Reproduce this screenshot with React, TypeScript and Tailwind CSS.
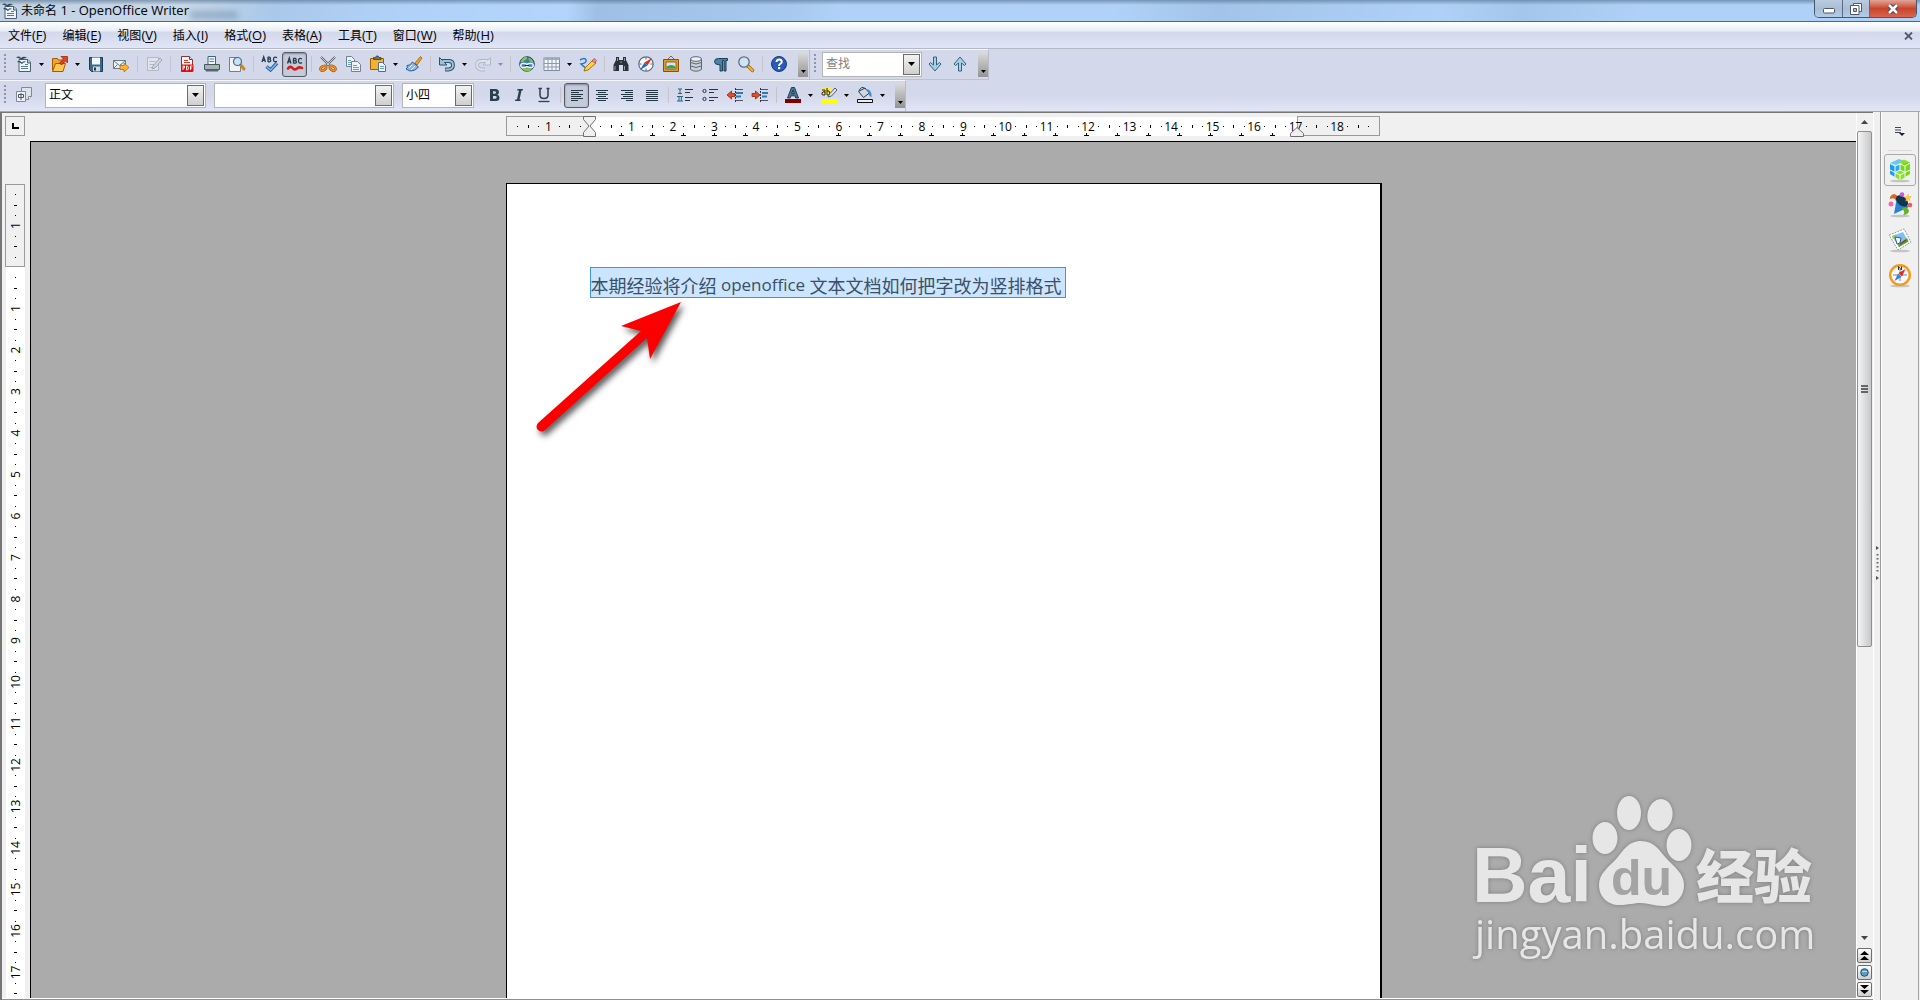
import React from 'react';

const UI_FONT = "font-['Open_Sans','Noto_Sans_CJK_SC',sans-serif]";

type KidsProps = { children: React.ReactNode };

function Glyph({ children }: KidsProps) {
  return (
    <svg viewBox="0 0 16 16" className="size-4 overflow-visible" aria-hidden="true">
      {children}
    </svg>
  );
}

const icons: Record<string, React.ReactNode> = {
  newDoc: (
    <>
      <path d="M3 3.500h9l2.500 2.500v9.500H3z" fill="#eef3f7" stroke="#48606f" />
      <path d="M11.500 3.500V7H15" fill="#b9c8d3" stroke="#48606f" />
      <path d="M0 1.500q3-2 5 .5Q8-.5 11 2 8 1.500 6 4 3 1.500 0 1.500zM1 6q2-2 5 .5 2-2 4-.5-3 0-4 2Q4 6 1 6z" fill="#2f4c5e" />
      <path d="M9 8.500h3M5 10.500h7M5 12.500h7" stroke="#5b7b90" />
    </>
  ),
  open: (
    <>
      <path d="M.5 14.500V2.500h5l1 1.500h5v4" fill="#f5a623" stroke="#a35a05" />
      <path d="M.5 15.500 3.500 7.500h10L11 15.500z" fill="#ffc850" stroke="#a35a05" />
      <path d="M9 .5h6.500V7l-2-2-4 4L7.500 7l4-4z" fill="#e2421f" stroke="#9c2a0c" strokeWidth=".8" />
    </>
  ),
  save: (
    <>
      <path d="M1.500 1.500h13v14h-11l-2-2z" fill="#3f6a86" stroke="#1d3b50" />
      <path d="M4 1.500h8v7H4z" fill="#f4f8fb" />
      <path d="M5 10.500h7v5H5z" fill="#cfdbe4" />
      <path d="M6 11.500h2v3H6z" fill="#1d3b50" />
    </>
  ),
  mail: (
    <>
      <path d="M.5 4.500h12v8H.5z" fill="#eef2f5" stroke="#667a88" />
      <path d="m.5 4.500 6 5 6-5M.5 12.500l4-4M12.500 12.500l-4-4" fill="none" stroke="#667a88" />
      <path d="M7 9.500h4V7l5 4.500-5 4.500v-2.500H7z" fill="#ffb52b" stroke="#b56a07" strokeWidth=".8" />
    </>
  ),
  edit: (
    <>
      <path d="M1.500 1.500h11v13h-11z" fill="#dfe4ee" stroke="#b4b9c6" />
      <path d="M3.500 5.500h6M3.500 8.500h5M3.500 11.500h3" stroke="#b4b9c6" />
      <path d="m6 13 1-3 7-8 2 2-7 8z" fill="#d0d5e0" stroke="#a0a6b4" />
    </>
  ),
  pdf: (
    <>
      <path d="M2.500.5h8l3 3v12h-11z" fill="#f6f6f6" stroke="#8b3530" />
      <path d="M10.500.5v3h3" fill="#dcdcdc" stroke="#8b3530" />
      <path d="M5 4.500h4M5 6.500h6" stroke="#cf3a31" />
      <path d="M2 8.500h12.500v7H2z" fill="#d9110b" />
      <path d="M4 14v-4h1.500v2H4M7.500 10v4h1l.8-1v-2l-.8-1zM11.500 14v-4H13.500M11.500 12h1.500" fill="none" stroke="#fff" strokeWidth=".9" />
    </>
  ),
  print: (
    <>
      <path d="M4 8V.5h7.500V8" fill="#f2f6fa" stroke="#3c6481" />
      <path d="M5.500 3h4.500M5.500 5.500h4.500" stroke="#4f86aa" />
      <path d="M.5 8.500h15v5H.5z" fill="#a5b0b8" stroke="#46545e" />
      <path d="M1 13.500h14l-1 2H2z" fill="#5b6872" />
      <path d="M12 10.500h2" stroke="#8de83a" strokeWidth="1.500" />
    </>
  ),
  preview: (
    <>
      <path d="M.5 1.500h9l2 2v12H.5z" fill="#eff3f6" stroke="#71828e" />
      <path d="m11 8 4 5" stroke="#c98715" strokeWidth="3" strokeLinecap="round" />
      <circle cx="8.500" cy="5.500" r="4" fill="#c9e2f4" stroke="#4a6b83" strokeWidth="1.200" />
    </>
  ),
  spell: (
    <>
      <path d="M0 6 1.700.8 3.400 6M.7 4.300h2M6 .8V6M6 1.200h1.800q1.400 1 0 2H6M7.800 3.300q2 1.300 0 2.500H6M15 1.700q-3.500-1.600-3.500 1.700T15 5.300" fill="none" stroke="#223d52" strokeWidth="1.300" />
      <path d="m4.500 10.500 4 3.500 6.500-7" fill="none" stroke="#1f5f93" strokeWidth="3.400" />
      <path d="m4.500 10.500 4 3.500 6.500-7" fill="none" stroke="#7cbcf0" strokeWidth="1.600" />
    </>
  ),
  autoSpell: (
    <>
      <path d="M.5 7.500 2.300 2 4 7.500M1 5.800h2.500M6.500 2v5.500M6.500 2.400h2q1.400 1.200 0 2.200h-2M8.500 4.700q2 1.300 0 2.500h-2M15 3q-3.500-1.700-3.500 1.800T15 6.700" fill="none" stroke="#223d52" strokeWidth="1.300" />
      <path d="M1 12.500q2.500-3 4.500-.5t4.500.5 5-.5" fill="none" stroke="#d41c1c" strokeWidth="2.600" strokeLinecap="round" />
    </>
  ),
  cut: (
    <>
      <path d="m1 1 9 9M15 1l-9 9" stroke="#5c6a74" strokeWidth="2.400" />
      <path d="m1 1 9 9M15 1l-9 9" stroke="#c8d2d9" strokeWidth="1" />
      <ellipse cx="3.300" cy="12.300" rx="3" ry="2" fill="none" stroke="#a8540a" strokeWidth="2.600" transform="rotate(-35 3.300 12.300)" />
      <ellipse cx="12.700" cy="12.300" rx="3" ry="2" fill="none" stroke="#a8540a" strokeWidth="2.600" transform="rotate(35 12.700 12.300)" />
      <ellipse cx="3.300" cy="12.300" rx="3" ry="2" fill="none" stroke="#f08c1c" strokeWidth="1.400" transform="rotate(-35 3.300 12.300)" />
      <ellipse cx="12.700" cy="12.300" rx="3" ry="2" fill="none" stroke="#f08c1c" strokeWidth="1.400" transform="rotate(35 12.700 12.300)" />
    </>
  ),
  copy: (
    <>
      <path d="M1.500.5h5l3 3v7h-8z" fill="#eef3f7" stroke="#6c8496" />
      <path d="M3 4.500h3M3 6.500h3M3 8.500h3" stroke="#6c9cc0" />
      <path d="M6.500 5.500h6l3 3v7h-9z" fill="#eef3f7" stroke="#6c8496" />
      <path d="M8 9.500h4M8 11.500h6M8 13.500h6" stroke="#6c9cc0" />
    </>
  ),
  paste: (
    <>
      <path d="M.5 2.500h13v11H.5z" fill="#f2b333" stroke="#9a5c07" />
      <path d="M3.500 3.500V1.500h2l1-1.500h1.500l1 1.500h2v2z" fill="#77716a" stroke="#4d4942" />
      <path d="M8.500 6.500h4l3 3v6h-7z" fill="#eef3f7" stroke="#56707f" />
      <path d="M10 10.500h4M10 12.500h4" stroke="#6c9cc0" />
    </>
  ),
  brush: (
    <>
      <path d="m9 7 5.500-6.500 1.500 1.500-5 7z" fill="#f0a32a" stroke="#9a5c07" strokeWidth=".8" />
      <path d="M1 9.500q3 .5 5.500-3.500l6 5Q9 15.500 4 15L0 13q2-1 1-3.500z" fill="#8ab7ea" stroke="#2d5d9b" />
      <path d="m3 12 3-3M5 14l4-4" stroke="#e6f1fc" />
    </>
  ),
  undo: (
    <>
      <path d="M3 5h6.500q4.500 0 4.500 4t-4.500 4.500H6" fill="none" stroke="#2c536d" strokeWidth="3.800" />
      <path d="M.5 1.500V9H8L5.500 6.500z" fill="#9cc3de" stroke="#2c536d" />
      <path d="M3.500 5h6q4.500 0 4.500 4t-4.500 4.500H6.500" fill="none" stroke="#9cc3de" strokeWidth="1.800" />
    </>
  ),
  redo: (
    <>
      <path d="M13 5H6.500Q2 5 2 9t4.500 4.500H10" fill="none" stroke="#b3b8c5" strokeWidth="3.800" />
      <path d="M15.500 1.500V9H8l2.500-2.500z" fill="#dfe3ec" stroke="#b3b8c5" />
      <path d="M12.500 5h-6Q2 5 2 9t4.500 4.500h3" fill="none" stroke="#dfe3ec" strokeWidth="1.800" />
    </>
  ),
  link: (
    <>
      <circle cx="8" cy="8" r="7.300" fill="#3f7fa8" stroke="#1f4a66" />
      <path d="M3 3q3-3 5-2 0 3-2 3L4 6 1.500 6zM9 2q4 0 5.500 5l-3-1zM2 12q2 3 6 3.500 4-.5 5.500-3z" fill="#8cc63f" />
      <rect x="1.800" y="7.500" width="6" height="4" rx="2" fill="none" stroke="#eef" strokeWidth="1.500" />
      <rect x="8.200" y="7.500" width="6" height="4" rx="2" fill="none" stroke="#eef" strokeWidth="1.500" />
      <path d="M6 9.500h4" stroke="#223" />
    </>
  ),
  table: (
    <>
      <path d="M0 1.500h15.500v13H0z" fill="#f3f6fa" stroke="#7b8b9b" />
      <path d="M0 1h15.500v3H0z" fill="#9fb2c3" />
      <path d="M0 7.500h15.500M0 11h15.500M4 2v12.500M8 2v12.500M12 2v12.500" stroke="#8b9bab" />
    </>
  ),
  draw: (
    <>
      <path d="M0 4q5-3 6 0T1 8q2 2 5 4" fill="none" stroke="#2577c9" strokeWidth="1.500" />
      <path d="m5 12 8-8 3 3-8 7-4 1z" fill="#ffd24a" stroke="#a3700b" />
      <path d="m12 5 2-2.500 2.500 2L15 7z" fill="#e98f96" stroke="#a8434b" strokeWidth=".7" />
    </>
  ),
  find: (
    <>
      <path d="M3 1h3v3h4V1h3v3l2.500 5v6H10V9H6v6H.5V9L3 4z" fill="#2a3239" />
      <path d="M2 10v4M11.500 10v4M4.500 2v3M11.500 2v3M7 6h2" stroke="#8d99a3" />
    </>
  ),
  compass: (
    <>
      <circle cx="8" cy="8" r="7.200" fill="#f8fafc" stroke="#5a6d7d" strokeWidth="1.200" />
      <path d="M8 1.500v2M8 12.500v2M1.500 8h2M12.500 8h2" stroke="#567" />
      <path d="M14 2 9.500 9.500l-3-3z" fill="#e02c1f" />
      <path d="M2 14 6.500 6.500l3 3z" fill="#2968c4" />
    </>
  ),
  gallery: (
    <>
      <path d="m5 3 3-3 3 3" fill="none" stroke="#7a6a4a" />
      <path d="M.5 3.500h15v12H.5z" fill="#e2992b" stroke="#8a4f08" />
      <path d="M3 6h10v7H3z" fill="#cfe8fb" stroke="#8a4f08" strokeWidth=".8" />
      <path d="M3.500 12.500v-2q5-3 9 0v2z" fill="#4b9a3c" />
    </>
  ),
  database: (
    <>
      <path d="M2.500 3v10.500q5.500 3.500 11 0V3z" fill="#c9d1d8" stroke="#5c6972" />
      <path d="M2.500 6.500q5.500 3 11 0M2.500 10q5.500 3 11 0" fill="none" stroke="#5c6972" />
      <ellipse cx="8" cy="3" rx="5.500" ry="2.300" fill="#eef1f4" stroke="#5c6972" />
    </>
  ),
  pilcrow: <path d="M14.500 2.500H5.500q-4 0-4 3t4 3.200h1.500V15h2.500V4.500h1.500V15H13V4.500h1.500z" fill="#4c82a5" stroke="#1d3f57" />,
  zoom: (
    <>
      <path d="m10 10 4.500 4.500" stroke="#a0650c" strokeWidth="3.400" strokeLinecap="round" />
      <path d="m10 10 4.500 4.500" stroke="#f5b840" strokeWidth="1.800" strokeLinecap="round" />
      <circle cx="6" cy="6" r="5.200" fill="#cfe5f6" stroke="#5b7080" strokeWidth="1.300" />
    </>
  ),
  help: (
    <>
      <circle cx="8" cy="8" r="7.500" fill="#2a5bb8" stroke="#173a80" />
      <path d="M5.500 6q.2-2.500 2.700-2.500T10.800 6Q10.600 7.300 9 8q-1 .6-.9 2" fill="none" stroke="#fff" strokeWidth="1.900" />
      <path d="M7 11h2.200v2.200H7z" fill="#fff" />
    </>
  ),
  arrowDown: <path d="M6.500 1h3v8l3-2.500L14 8l-6 7-6-7 1.500-1.500 3 2.500z" fill="#a9cfe6" stroke="#33627f" />,
  arrowUp: <path d="M6.500 15h3V7l3 2.500L14 8 8 1 2 8l1.500 1.500 3-2.500z" fill="#a9cfe6" stroke="#33627f" />,
  styles: (
    <>
      <path d="M5.500.5h10v9l-3 3h-7z" fill="#dde5ec" stroke="#7d8a95" />
      <path d="M12.500 12.500v-3h3" fill="#fff" stroke="#7d8a95" />
      <path d="M.5 4.500h9v10h-9z" fill="#eef2f6" stroke="#7d8a95" />
      <path d="M2.500 7.500h5v3h-5zM5 6v7" fill="none" stroke="#4a5a67" />
    </>
  ),
  bold: <path d="M4 2h5.500q3.500.3 3.500 3.300 0 1.800-1.700 2.500 2.200.6 2.200 3Q13.500 14 10 14H4zM7 4.300v2.500h1.800q1.400-.2 1.400-1.200T8.800 4.300zM7 9v2.700h2.300q1.400-.2 1.400-1.400T9.300 9z" fill="#2b3f51" fillRule="evenodd" />,
  italic: <path d="M6.500 2H12l-.3 1.500H10.500L8.500 12.500h1.300L9.500 14H4l.3-1.500H6L8 3.500H6.200z" fill="#2b3f51" />,
  underline: (
    <>
      <path d="M4 1.500v6.500q0 3.500 4 3.500t4-3.500V1.500M2.500 1.500H6M10.500 1.500h3" fill="none" stroke="#2b3f51" strokeWidth="1.500" />
      <path d="M2.500 14.500h11" stroke="#2b3f51" strokeWidth="1.300" />
    </>
  ),
  alignLeft: <path d="M2 3.500h12M2 5.500h8M2 7.500h12M2 9.500h10M2 11.500h12M2 13.500h7" stroke="#243544" />,
  alignCenter: <path d="M2 3.500h12M4 5.500h8M2 7.500h12M4 9.500h8M2 11.500h12M4 13.500h8" stroke="#243544" />,
  alignRight: <path d="M2 3.500h12M6 5.500h8M2 7.500h12M4 9.500h10M2 11.500h12M7 13.500h7" stroke="#243544" />,
  justify: <path d="M2 3.500h12M2 5.500h12M2 7.500h12M2 9.500h12M2 11.500h12M2 13.500h12" stroke="#243544" />,
  numbered: (
    <>
      <path d="M1 2h4M1 6.500h4M3 2v4.500M0 9.500h6M0 14h6M2 9.500V14M4.300 9.500V14" stroke="#2d6183" />
      <path d="M8 2.500h8M8 5.500h5M8 10.500h8M8 13.500h5" stroke="#243544" />
    </>
  ),
  bullets: (
    <>
      <circle cx="2.500" cy="4" r="1.600" fill="#dde" stroke="#243544" />
      <circle cx="2.500" cy="12" r="1.600" fill="#dde" stroke="#243544" />
      <path d="M7 2.500h9M7 5.500h5M7 10.500h9M7 13.500h5" stroke="#243544" />
    </>
  ),
  outdent: (
    <>
      <path d="M8.500 1v14" stroke="#334" strokeDasharray="2 1" />
      <path d="M9 2.500h7M9 13.500h7" stroke="#556" />
      <path d="M9 6h7M9 9.500h5" stroke="#2a7cb8" strokeWidth="2" />
      <path d="M0 8l4.500-4v2.500H8v3H4.500V12z" fill="#e2502f" stroke="#8f2209" strokeWidth=".8" />
    </>
  ),
  indent: (
    <>
      <path d="M8.500 1v14" stroke="#334" strokeDasharray="2 1" />
      <path d="M9 2.500h7M9 13.500h7" stroke="#556" />
      <path d="M10 6h6M10 9.500h5" stroke="#2a7cb8" strokeWidth="2" />
      <path d="M8 8 3.500 4v2.500H0v3h3.500V12z" fill="#e2502f" stroke="#8f2209" strokeWidth=".8" />
    </>
  ),
  fontColor: (
    <>
      <path d="M2.500 11 6.500.5h3L13.500 11h-2.800l-.8-2.200H6L5.200 11zM6.800 6.600h2.400L8 3z" fill="#4c7590" stroke="#1b3345" strokeWidth=".9" />
      <path d="M0 12h16v4H0z" fill="#800000" />
    </>
  ),
  highlight: (
    <>
      <path d="M0 0h11v9H0z" fill="#ffe94a" />
      <path d="M1 3h3v5H2Q.5 8 1 6t3-.8M6 1v7h2q1.500-2 0-4H6" fill="none" stroke="#222" />
      <path d="m7 10 1.500-3L14 1l2 2-5.500 6z" fill="#dfe6ec" stroke="#4f5d68" />
      <path d="M0 12h16v4H0z" fill="#ffff00" />
    </>
  ),
  fill: (
    <>
      <path d="m1.500 4.500 6.500-3.500 4.500 5-6 4.500z" fill="#cfd8df" stroke="#2c3e4c" />
      <path d="M2 4Q4-1.500 8 1.500" fill="none" stroke="#2c3e4c" />
      <path d="M8 2q7-.5 6.500 8-3-.5-2.500-4z" fill="#3c8fc9" />
      <path d="M.5 12.500h15v3H.5z" fill="#e8ecf8" stroke="#111" />
    </>
  ),
};

function Tool({ name, label, pressed }: { name: string; label: string; pressed?: boolean }) {
  return (
    <button
      type="button"
      aria-label={label}
      aria-pressed={pressed}
      className={
        pressed
          ? 'flex h-[25px] w-[25px] shrink-0 items-center justify-center rounded-[3px] border border-[#565b68] bg-[#c6cbda] shadow-[inset_0_1px_2px_#8087a0]'
          : 'flex h-[25px] w-[25px] shrink-0 items-center justify-center'
      }
    >
      <Glyph>{icons[name]}</Glyph>
    </button>
  );
}

function Caret({ label, dim }: { label: string; dim?: boolean }) {
  return (
    <button type="button" aria-label={label} className="flex h-[25px] w-[11px] shrink-0 items-center justify-center">
      <svg viewBox="0 0 5 3" className="h-[3px] w-[5px]" aria-hidden="true">
        <path d="M0 0h5L2.500 3z" fill={dim ? '#8d92a0' : '#000'} />
      </svg>
    </button>
  );
}

function Sep() {
  return (
    <div className="flex w-2 shrink-0 justify-center">
      <div className="h-4 w-px bg-[#c3c3c8]" />
    </div>
  );
}

function Grip() {
  return <div className="ml-1 h-5 w-[3px] shrink-0 bg-[repeating-linear-gradient(#8f95a5_0_2px,transparent_2px_4px)] bg-[length:2px_100%] bg-no-repeat" />;
}

function Overflow({ label }: { label: string }) {
  return (
    <button type="button" aria-label={label} className="flex h-[25px] w-[10px] shrink-0 items-end justify-center bg-linear-to-b from-[#dcdcdc] to-[#949494] pb-1">
      <svg viewBox="0 0 5 3" className="h-[3px] w-[5px]" aria-hidden="true">
        <path d="M0 0h5L2.500 3z" />
      </svg>
    </button>
  );
}

function DropArrow() {
  return (
    <span className="pointer-events-none absolute top-px right-px bottom-px flex w-[17px] items-center justify-center border border-[#6c6c6c] bg-linear-to-b from-[#f3f3f3] to-[#cfcfcf]">
      <svg viewBox="0 0 7 4" className="h-1 w-[7px]" aria-hidden="true">
        <path d="M0 0h7L3.500 4z" />
      </svg>
    </span>
  );
}

function Combo({ label, value, className }: { label: string; value: string; className: string }) {
  return (
    <div className={`relative h-[25px] shrink-0 border border-[#b4b4b4] bg-white ${className}`}>
      <select aria-label={label} defaultValue={value} className="block h-full w-full appearance-none bg-transparent pb-px pl-[3px] text-xs leading-none text-black outline-none">
        <option value={value}>{value}</option>
      </select>
      <DropArrow />
    </div>
  );
}

const menus: [string, string][] = [
  ['文件', 'F'],
  ['编辑', 'E'],
  ['视图', 'V'],
  ['插入', 'I'],
  ['格式', 'O'],
  ['表格', 'A'],
  ['工具', 'T'],
  ['窗口', 'W'],
  ['帮助', 'H'],
];

function TitleBar() {
  return (
    <header className="relative flex h-[22px] shrink-0 items-center overflow-hidden border-b border-[#56657c] bg-[linear-gradient(to_bottom,rgba(70,100,130,0.55),rgba(120,150,180,0)_5px),linear-gradient(100deg,#c0d2e4_0,#c8d8e8_180px,#a9c8ea_270px,#b1d2f8_400px,#b4d5fb_560px,#9fc0e4_590px,#a8c9ee_780px,#b1d2f8_830px,#b1d2f8_1100px,#a3c4e9_1200px,#b0d1f7_1420px,#a4c6ea_1500px,#b0d1f7_1620px,#b0d1f7_100%)] pl-[2px]">
      <div className="absolute top-[11px] left-[190px] h-2 w-12 bg-[#6f87a4] opacity-50 blur-[3px]" />
      <Glyph>{icons.newDoc}</Glyph>
      <h1 className="relative ml-[3px] text-[13px] whitespace-nowrap text-black">
        <span className="text-xs">未命名</span> 1 - OpenOffice Writer
      </h1>
      <div className="mr-[3px] ml-auto flex h-[18px] self-start overflow-hidden rounded-b-[5px] border border-t-0 border-[#47566b]">
        <button type="button" aria-label="最小化" className="flex w-7 items-center justify-center border-r border-[#5a6b83] bg-linear-to-b from-[#b8cbe0] via-[#a9bdd5] to-[#b4cce8]">
          <svg viewBox="0 0 12 6" className="mt-1 h-[6px] w-3" aria-hidden="true">
            <rect x=".5" y=".5" width="11" height="4.500" rx="1" fill="#fff" stroke="#4c586c" />
          </svg>
        </button>
        <button type="button" aria-label="还原" className="flex w-[27px] items-center justify-center border-r border-[#5a6b83] bg-linear-to-b from-[#b8cbe0] via-[#a9bdd5] to-[#b4cce8]">
          <svg viewBox="0 0 12 12" className="size-3" aria-hidden="true">
            <path d="M3.500.5h8v8h-8z" fill="#fff" stroke="#4c586c" />
            <path d="M.5 2.500h8.500v9H.5z" fill="#fff" stroke="#4c586c" />
            <path d="M3.500 5.500h3v3h-3z" fill="#a9bdd5" stroke="#4c586c" />
          </svg>
        </button>
        <button type="button" aria-label="关闭" className="flex w-[46px] items-center justify-center bg-linear-to-b from-[#e0a598] via-[#c8442c] to-[#d9644c]">
          <svg viewBox="0 0 12 10" className="h-[10px] w-3" aria-hidden="true">
            <path d="m2 1 8 8M10 1 2 9" stroke="#4c3a48" strokeWidth="4.500" />
            <path d="m2 1 8 8M10 1 2 9" stroke="#fff" strokeWidth="2.600" />
          </svg>
        </button>
      </div>
    </header>
  );
}

function MenuBar() {
  return (
    <nav className="flex h-[27px] shrink-0 items-center border-b border-[#b4b9c8] bg-[linear-gradient(#ffffff_0,#e8eef6_9px,#d3d9eb_10px,#e0e6f6_26px)] pt-px pl-2">
      {menus.map(([text, key]) => (
        <button key={key} type="button" className="mr-4 text-[13px] whitespace-nowrap text-black">
          <span className="text-xs">{text}</span>(<span className="underline underline-offset-2">{key}</span>)
        </button>
      ))}
      <button type="button" aria-label="关闭文档" className="mr-[7px] ml-auto">
        <svg viewBox="0 0 9 8" className="h-2 w-[9px]" aria-hidden="true">
          <path d="m1 .5 7 7M8 .5l-7 7" stroke="#4c5a70" strokeWidth="1.800" />
        </svg>
      </button>
    </nav>
  );
}

function StandardBar() {
  return (
    <div role="toolbar" aria-label="标准" className="flex h-[31px] items-center">
      <div className="flex h-full items-center border-t border-r border-b border-t-[#f4f6fc] border-r-[#b9bcc6] border-b-[#bfc2cc] pb-px">
        <Grip />
        <div className="ml-1 flex items-center">
          <Tool name="newDoc" label="新建" />
          <Caret label="新建选项" />
          <Tool name="open" label="打开" />
          <Caret label="打开选项" />
          <Tool name="save" label="保存" />
          <Tool name="mail" label="以电子邮件发送" />
          <Sep />
          <Tool name="edit" label="编辑文件" />
          <Sep />
          <Tool name="pdf" label="导出为 PDF" />
          <Tool name="print" label="打印" />
          <Tool name="preview" label="页面预览" />
          <Sep />
          <Tool name="spell" label="拼写检查" />
          <Tool name="autoSpell" label="自动拼写检查" pressed />
          <Sep />
          <Tool name="cut" label="剪切" />
          <Tool name="copy" label="复制" />
          <Tool name="paste" label="粘贴" />
          <Caret label="粘贴选项" />
          <Tool name="brush" label="格式刷" />
          <Sep />
          <Tool name="undo" label="撤消" />
          <Caret label="撤消列表" />
          <Tool name="redo" label="恢复" />
          <Caret label="恢复列表" dim />
          <Sep />
          <Tool name="link" label="超链接" />
          <Tool name="table" label="表格" />
          <Caret label="表格选项" />
          <Tool name="draw" label="显示绘图功能" />
          <Sep />
          <Tool name="find" label="查找与替换" />
          <Tool name="compass" label="导航" />
          <Tool name="gallery" label="图片库" />
          <Tool name="database" label="数据源" />
          <Tool name="pilcrow" label="非打印字符" />
          <Tool name="zoom" label="显示比例" />
          <Sep />
          <Tool name="help" label="帮助" />
        </div>
        <div className="mr-px ml-[7px] flex">
          <Overflow label="更多标准工具" />
        </div>
      </div>
      <div className="flex h-full items-center border-t border-r border-b border-t-[#f4f6fc] border-r-[#b9bcc6] border-b-[#bfc2cc] pb-px">
        <Grip />
        <div className="relative ml-[5px] h-[25px] w-[100px] border border-[#b4b4b4] bg-white">
          <input aria-label="查找" placeholder="查找" className="block h-full w-full bg-transparent pr-5 pb-px pl-[3px] text-xs outline-none placeholder:text-[#808080]" />
          <DropArrow />
        </div>
        <Tool name="arrowDown" label="查找下一个" />
        <Tool name="arrowUp" label="查找上一个" />
        <div className="ml-[6px] flex">
          <Overflow label="更多查找工具" />
        </div>
      </div>
    </div>
  );
}

function FormatBar() {
  return (
    <div role="toolbar" aria-label="格式" className="flex h-[31px] items-center">
      <div className="flex h-full items-center border-t border-r border-t-[#f4f6fc] border-r-[#b9bcc6] pb-[2px]">
        <Grip />
        <div className="ml-1 flex items-center">
          <Tool name="styles" label="样式和格式" />
          <Combo label="应用样式" value="正文" className="ml-[9px] w-[161px]" />
          <Combo label="字体名称" value="" className="ml-2 w-[180px]" />
          <Combo label="字体大小" value="小四" className="ml-2 w-[72px]" />
          <div className="w-[7px]" />
          <Tool name="bold" label="粗体" />
          <Tool name="italic" label="斜体" />
          <Tool name="underline" label="下划线" />
          <Sep />
          <Tool name="alignLeft" label="左对齐" pressed />
          <Tool name="alignCenter" label="居中" />
          <Tool name="alignRight" label="右对齐" />
          <Tool name="justify" label="两端对齐" />
          <Sep />
          <Tool name="numbered" label="编号" />
          <Tool name="bullets" label="项目符号" />
          <Tool name="outdent" label="减少缩进" />
          <Tool name="indent" label="增加缩进" />
          <Sep />
          <Tool name="fontColor" label="字体颜色" />
          <Caret label="字体颜色选项" />
          <Tool name="highlight" label="突出显示" />
          <Caret label="突出显示选项" />
          <Tool name="fill" label="背景颜色" />
          <Caret label="背景颜色选项" />
        </div>
        <div className="ml-[7px] flex">
          <Overflow label="更多格式工具" />
        </div>
      </div>
    </div>
  );
}

const CM = 41.5;
const range = (from: number, to: number) => Array.from({ length: to - from + 1 }, (_, i) => from + i);

function HorizontalRuler() {
  const zero = 84;
  const quarters = range(-7, 78).filter((q) => q % 4 !== 0);
  return (
    <svg viewBox="0 0 875 22" className="h-[22px] w-[875px] shrink-0" aria-label="水平标尺" shapeRendering="crispEdges">
      <rect x="84" y="1" width="707" height="19" fill="#fff" />
      <path d="M84 .5H.5v19H84M791 .5h82.500v19H791V.5" fill="none" stroke="#9a9a9a" />
      {quarters.map((q) => {
        const x = Math.round(zero + (q * CM) / 4);
        return q % 2 === 0 ? (
          <rect key={q} x={x} y="9" width="1" height="3" />
        ) : (
          <rect key={q} x={x} y="10" width="1" height="1" />
        );
      })}
      {range(1, 22).map((k) => (
        <path key={k} d={`M${zero + k * 31 - 2} 19.500h5M${zero + k * 31 + 0.5} 17v3`} stroke="#000" />
      ))}
      {range(-1, 18)
        .filter((n) => n !== 0)
        .map((n) => (
          <text key={n} x={zero + n * CM} y="15" textAnchor="middle" fontSize="12">
            {Math.abs(n)}
          </text>
        ))}
      <g fill="#f0f0f0" stroke="#6f6f6f" shapeRendering="auto">
        <path d="M77.500.5h12v3L84 10l5.500 6.500v4h-12v-4L83 10l-5.500-6.500z" />
        <path d="M784.500 20.500v-3l6.500-6 6.500 6v3z" />
      </g>
    </svg>
  );
}

function VerticalRuler() {
  const zero = 83;
  const quarters = range(-7, 71).filter((q) => q % 4 !== 0);
  return (
    <svg viewBox="0 0 20 1000" className="h-[1000px] w-5 shrink-0" aria-label="垂直标尺" shapeRendering="crispEdges">
      <rect x="1" y={zero} width="19" height="917" fill="#fff" />
      <rect x=".5" y=".5" width="19" height="82" fill="#f0f0f0" stroke="#9a9a9a" />
      {quarters.map((q) => {
        const y = Math.round(zero + (q * CM) / 4);
        return q % 2 === 0 ? (
          <rect key={q} x="9" y={y} width="3" height="1" />
        ) : (
          <rect key={q} x="10" y={y} width="1" height="1" />
        );
      })}
      {range(-1, 17)
        .filter((n) => n !== 0)
        .map((n) => (
          <text key={n} transform={`translate(15 ${zero + n * CM}) rotate(-90)`} textAnchor="middle" fontSize="12">
            {Math.abs(n)}
          </text>
        ))}
    </svg>
  );
}

function Arrow() {
  return (
    <svg viewBox="0 0 156 140" className="absolute top-[114px] left-[28px] h-[140px] w-[156px] drop-shadow-[3px_4px_3px_rgba(0,0,0,0.65)]" aria-hidden="true">
      <path d="M146 4 86 28l20 5-103 92q-3 4 0 7 4 3 7 0L112 40l3 21z" fill="#fb0000" />
    </svg>
  );
}

function Watermark() {
  return (
    <svg viewBox="0 0 346 166" className="absolute right-[38px] bottom-[38px] h-[166px] w-[346px] drop-shadow-[0_0_2px_rgba(90,90,90,0.6)]" role="img" aria-label="Baidu 经验">
      <g fill="#e6e6e6">
        <text x="0" y="108" fontSize="77" fontWeight="700" fontFamily="Liberation Sans, sans-serif">
          Bai
        </text>
        <ellipse cx="133" cy="44" rx="12.500" ry="16" />
        <ellipse cx="157" cy="19" rx="12" ry="17" />
        <ellipse cx="188" cy="21" rx="12.500" ry="16" transform="rotate(10 188 21)" />
        <ellipse cx="207" cy="51" rx="12.500" ry="16" />
        <path d="M169 47c-13 0-18 10-24 17-8 9-18 15-18 27 0 12 9 20 20 20 9 0 15-2 22-2s13 3 22 3c11 0 21-8 21-21 0-12-10-18-18-27-7-8-12-17-25-17z" />
        <text x="224" y="104" fontSize="58" fontWeight="900" fontFamily="Noto Sans CJK SC, sans-serif">
          经验
        </text>
        <text x="3" y="155" fontSize="40" fontFamily="Open Sans, sans-serif">
          jingyan.baidu.com
        </text>
      </g>
      <text x="139" y="101" fontSize="50" fontWeight="700" fontFamily="Liberation Sans, sans-serif" fill="#a4a4a4">
        du
      </text>
    </svg>
  );
}

function DocumentArea() {
  return (
    <main className="relative flex min-w-0 flex-1 justify-center overflow-hidden border-t border-l border-black bg-[#ababab] pt-[41px]">
      <article className="relative w-[876px] shrink-0 border-t border-r-2 border-l border-black bg-white px-[83px] pt-[83px]">
        <p className="flex h-[31px] w-[476px] items-center border border-[#3d95e8] bg-[#cce5fe] pt-1 text-lg leading-none whitespace-pre text-[#3b4f66]">
          <span className="font-['Noto_Sans_CJK_SC',sans-serif]">本期经验将介绍</span>
          <span className="text-[17px]"> openoffice </span>
          <span className="font-['Noto_Sans_CJK_SC',sans-serif]">文本文档如何把字改为竖排格式</span>
        </p>
        <Arrow />
      </article>
      <Watermark />
    </main>
  );
}

function NavButton({ label, children }: { label: string; children: React.ReactNode }) {
  return (
    <button type="button" aria-label={label} className="mt-[2px] flex size-[15px] items-center justify-center rounded-[2px] border border-[#6e6e6e] bg-linear-to-b from-white to-[#cfcfcf]">
      <svg viewBox="0 0 9 9" className="size-[9px]" aria-hidden="true">
        {children}
      </svg>
    </button>
  );
}

function ScrollColumn() {
  return (
    <div className="flex w-[17px] shrink-0 flex-col items-center border-l border-white bg-[#f0f0f0] pr-px pb-px">
      <button type="button" aria-label="向上滚动" className="flex h-[18px] w-full items-center justify-center">
        <svg viewBox="0 0 7 4" className="h-1 w-[7px]" aria-hidden="true">
          <path d="M0 4h7L3.500 0z" fill="#444" />
        </svg>
      </button>
      <div className="flex w-full flex-1 flex-col">
        <div className="flex h-[516px] w-full flex-col items-center justify-center gap-px rounded-[2px] border border-[#8f8f8f] bg-linear-to-r from-[#f4f4f4] to-[#c6c8ca]">
          <div className="h-[2px] w-[7px] bg-[#666]" />
          <div className="h-[2px] w-[7px] bg-[#666]" />
          <div className="h-[2px] w-[7px] bg-[#666]" />
        </div>
      </div>
      <button type="button" aria-label="向下滚动" className="flex h-4 w-full items-center justify-center">
        <svg viewBox="0 0 7 4" className="h-1 w-[7px]" aria-hidden="true">
          <path d="M0 0h7L3.500 4z" fill="#444" />
        </svg>
      </button>
      <NavButton label="上一页">
        <path d="M0 4h9L4.500 0zM0 9h9L4.500 5z" />
      </NavButton>
      <NavButton label="导航">
        <circle cx="4.500" cy="4.500" r="3.800" fill="#5f9cc4" stroke="#234d6b" />
        <path d="M2 3.500h5" stroke="#b9dbf0" />
      </NavButton>
      <NavButton label="下一页">
        <path d="M0 0h9L4.500 4zM0 5h9L4.500 9z" />
      </NavButton>
    </div>
  );
}

function Splitter() {
  return (
    <div className="flex w-2 shrink-0 flex-col items-center justify-center border-r border-l border-r-[#9a9a9a] border-l-white bg-[#f0f0f0] pt-[14px]">
      <svg viewBox="0 0 3 34" className="h-[34px] w-[3px]" aria-hidden="true">
        <path d="M0 0v4l3-2zM0 30v4l3-2z" fill="#555" />
        <path d="M.5 8h2v1.500h-2zM.5 12h2v1.500h-2zM.5 16h2v1.500h-2zM.5 20h2v1.500h-2zM.5 24h2v1.500h-2z" fill="#666" />
      </svg>
    </div>
  );
}

function Deck({ label, active, children }: { label: string; active?: boolean; children: React.ReactNode }) {
  return (
    <button
      type="button"
      aria-label={label}
      aria-pressed={active}
      className={
        active
          ? 'flex size-8 items-center justify-center rounded-[3px] border border-[#a9a9a9]'
          : 'flex size-8 items-center justify-center'
      }
    >
      <svg viewBox="0 0 24 24" className="size-6 overflow-visible" aria-hidden="true">
        <ellipse cx="12" cy="23" rx="10" ry="1.300" fill="#c4c4c4" />
        {children}
      </svg>
    </button>
  );
}

function Sidebar() {
  return (
    <aside className="mr-px flex w-[38px] shrink-0 flex-col items-center border-r border-l border-r-[#a5a5a5] border-l-white bg-[#f0f0f0] pt-[10px]">
      <button type="button" aria-label="侧边栏设置" className="mb-[11px] flex h-[17px] w-6 items-center justify-center">
        <svg viewBox="0 0 10 10" className="size-[10px] overflow-visible" aria-hidden="true">
          <path d="M0 1.500h6M0 4h6M0 6.500h6" stroke="#3a4658" />
          <path d="M4 7h6L7 10z" fill="#16203a" />
        </svg>
      </button>
      <div className="mb-[3px] h-px w-6 bg-[#dadada]" />
      <div className="flex flex-col gap-[3px]">
        <Deck label="属性" active>
          <path d="m2 5 9-4 5 2-8 4z" fill="#63c9f5" />
          <path d="m2 5 5 2.500V19l-5-3z" fill="#1b9cf0" />
          <path d="m7 7.500 5-2v14l-5-.5z" fill="#2fa8f4" />
          <path d="m11 4 5-2.500 6 3-5 3z" fill="#8be028" />
          <path d="m12 6 10-2v12l-10 6z" fill="#7ad51a" />
          <path d="m7 14 5-2 5 2v5l-5 3-5-3z" fill="#8be028" />
          <path d="m2 5.500 5 2.500 5-2 5 2 5-3M7 8v11M12 6v6M17 8v11M2 12l5 2.500 5-2.500 5 2.500 5-2.500M12 17v5M7 14.500l5 2.500 5-2.500" fill="none" stroke="#f4fcff" strokeWidth="1" />
        </Deck>
        <Deck label="样式和格式">
          <path d="M2 4q4-6 8 0l-2 4q-1-4-6-2z" fill="#d9691c" />
          <path d="m9 4 12 10-15 7z" fill="#2a83d0" />
          <ellipse cx="14" cy="8" rx="7" ry="4.500" transform="rotate(40 14 8)" fill="#12354f" />
          <path d="M14 15q6-2 7 3-1 4-6 4 3-2-1-7z" fill="#63b32a" />
          <circle cx="3" cy="11" r="2.500" fill="#ee6bb0" />
          <circle cx="14" cy="1.500" r="2.300" fill="#c65be0" />
          <path d="m20 0 1 3 3 .5-2 2 .5 3-2.500-1.500L17.500 8.500l.5-3-2-2 3-.5z" fill="#f9c74f" />
          <circle cx="22" cy="12" r="2.300" fill="#ee5a5a" />
        </Deck>
        <Deck label="图片库">
          <path d="m1 7 15-6 7 13-13 8z" fill="#fdfdfd" stroke="#9a9a9a" strokeDasharray="2 1" />
          <path d="m4 8 11-4 5 9-9 6z" fill="#7fc1f0" />
          <path d="m4 8 4-1.500-3 5z" fill="#8edb2d" />
          <path d="m10 17 9-7 1.500 3.500L11 19z" fill="#4aa32e" />
          <path d="m7 9 6 1-1 5-3 1z" fill="#fff" stroke="#2b5e8c" />
          <path d="m12 16 6-4" stroke="#a33b16" strokeWidth="1.500" />
        </Deck>
        <Deck label="导航">
          <circle cx="12" cy="12" r="9.800" fill="#f7fafc" stroke="#f49a1c" strokeWidth="2.400" />
          <path d="M5 12h14M12 6v12" stroke="#b8c2ca" strokeWidth="2" />
          <path d="M17.500 6 14 13.500 10.500 10z" fill="#d9301f" />
          <path d="M6.500 18 10 10.500l3.500 3.500z" fill="#3c82d6" />
          <path d="M10.500 7V3.500l3 3.500V3.500" fill="none" stroke="#333" />
        </Deck>
      </div>
    </aside>
  );
}

export default function App() {
  return (
    <div className={`flex h-screen flex-col overflow-hidden bg-[#f0f0f0] ${UI_FONT}`}>
      <TitleBar />
      <MenuBar />
      <div className="shrink-0 border-b border-[#a4a6ba] bg-[linear-gradient(#d3d9eb_0,#d3d9eb_75%,#e0e6f6_100%)]">
        <StandardBar />
        <FormatBar />
      </div>
      <div className="flex min-h-0 flex-1 bg-[#f0f0f0]">
        <div className="flex min-w-0 flex-1 flex-col border-t border-l-2 border-[#767676]">
          <div className="flex min-h-0 flex-1">
            <div className="flex min-w-0 flex-1 flex-col">
              <div className="flex h-7 shrink-0 items-start pt-[3px]">
                <button type="button" aria-label="制表位类型" className="ml-[3px] flex size-5 shrink-0 items-center justify-center border border-[#9a9a9a]">
                  <svg viewBox="0 0 7 6" className="h-[6px] w-[7px]" aria-hidden="true">
                    <path d="M0 0h2v4h5v2H0z" />
                  </svg>
                </button>
                <div className="ml-[6px] flex min-w-0 flex-1 justify-center">
                  <HorizontalRuler />
                </div>
              </div>
              <div className="flex min-h-0 flex-1">
                <div className="mr-[5px] ml-[3px] overflow-hidden pt-[43px]">
                  <VerticalRuler />
                </div>
                <DocumentArea />
              </div>
            </div>
            <ScrollColumn />
          </div>
          <div className="h-[2px] shrink-0 border-t border-b border-t-white border-b-[#909090]" />
        </div>
        <Splitter />
        <Sidebar />
      </div>
    </div>
  );
}
